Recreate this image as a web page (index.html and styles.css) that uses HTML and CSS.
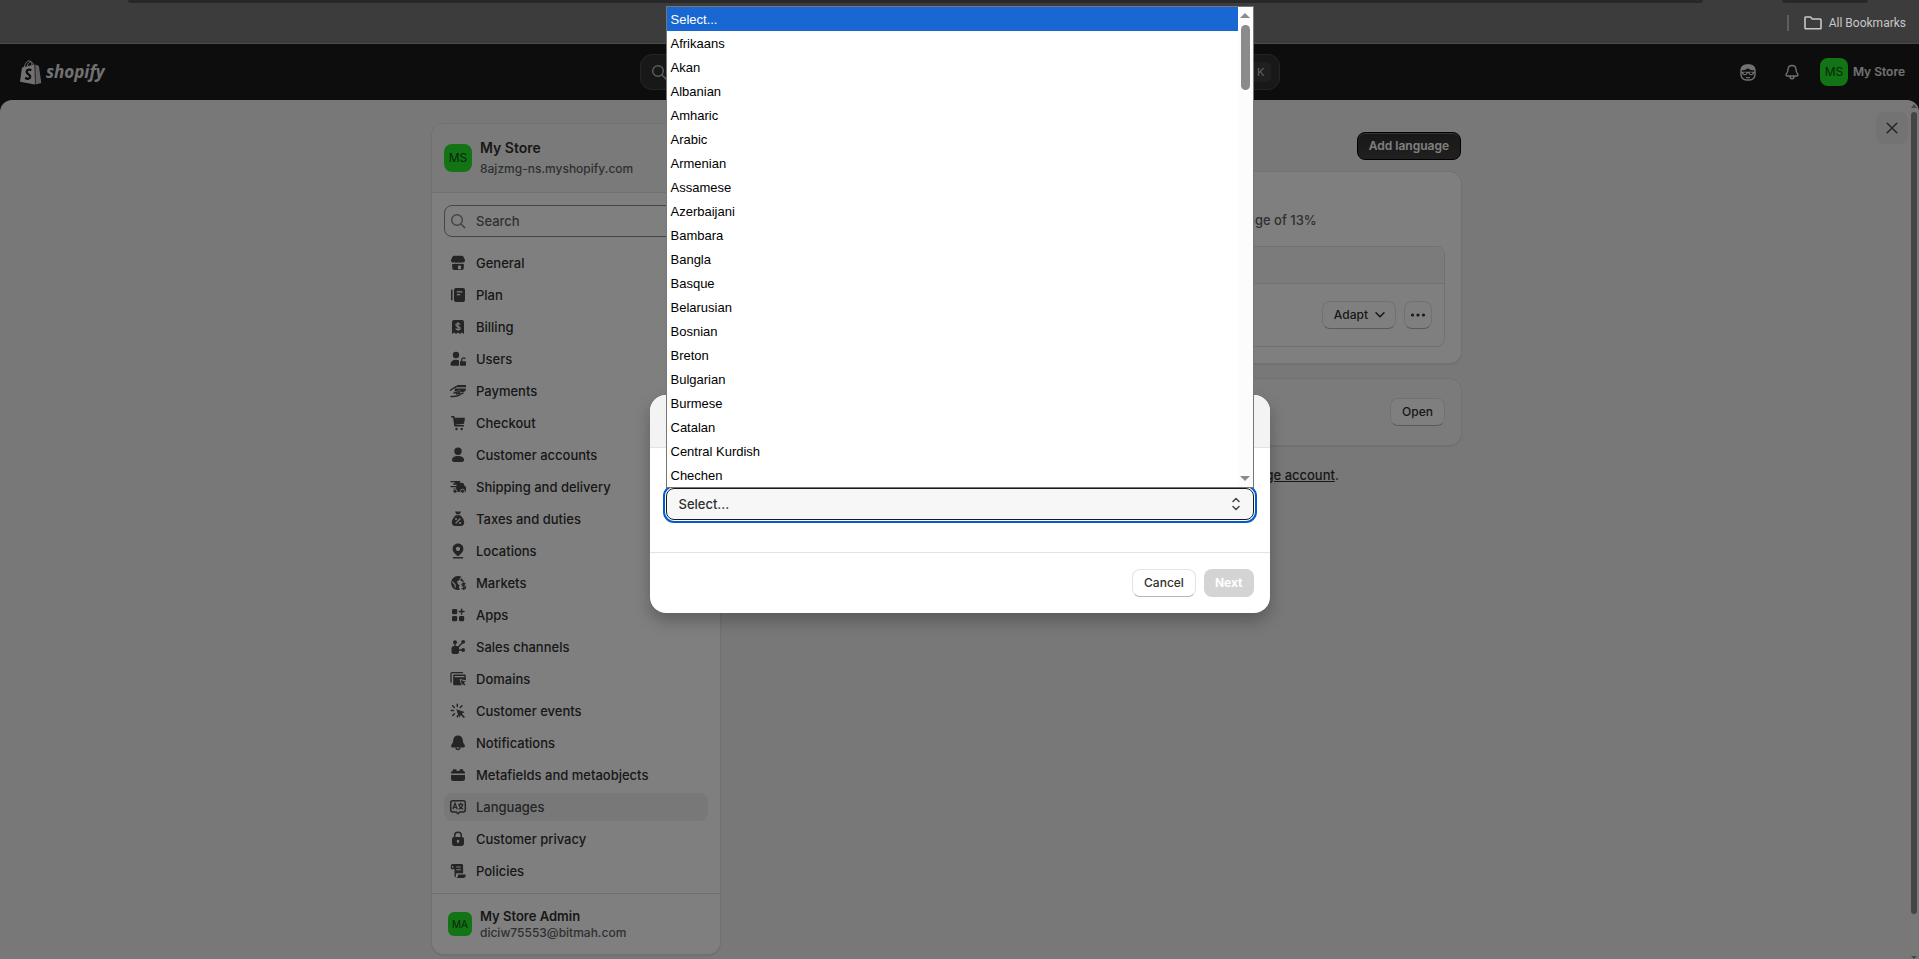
FILE: index.html
```html
<!DOCTYPE html>
<html lang="en">
<head>
    <meta charset="UTF-8">
    <title>Languages - Settings</title>
    <link rel="stylesheet" href="styles.css">
</head>
<body>

<!-- icon set -->
<svg class="sprite" xmlns="http://www.w3.org/2000/svg">
    <symbol id="i-search" viewBox="0 0 20 20">
        <circle cx="9" cy="9" r="5.3" fill="none" stroke="currentColor" stroke-width="1.5"/>
        <path d="M13 13l3.6 3.6" stroke="currentColor" stroke-width="1.5" stroke-linecap="round"/>
    </symbol>
    <symbol id="i-general" viewBox="0 0 20 20">
        <path d="M6.500 2.800h7c1 0 1.800.5 2.200 1.400L17 7v.7a2 2 0 0 1-3.500 1.200 2.200 2.200 0 0 1-3.500 0 2.200 2.200 0 0 1-3.500 0A2 2 0 0 1 3 7.700V7l1.300-2.800c.4-.9 1.200-1.400 2.200-1.400z"/>
        <path fill-rule="evenodd" d="M4.200 11c.9.200 1.700 0 2.500-.5 1 .7 2.300.7 3.300 0 1 .7 2.300.7 3.300 0 .8.500 1.600.7 2.500.5v4c0 1.100-.9 2-2 2H6.200c-1.100 0-2-.9-2-2zM10.800 12.600c-.5 0-.8.3-.8.800v2.800h3v-2.800c0-.5-.3-.8-.8-.8z"/>
    </symbol>
    <symbol id="i-plan" viewBox="0 0 20 20">
        <rect x="3" y="4.500" width="1.500" height="11" rx=".7"/>
        <path fill-rule="evenodd" d="M8 3h7a2 2 0 0 1 2 2v10a2 2 0 0 1-2 2H8a2 2 0 0 1-2-2V5a2 2 0 0 1 2-2zm.8 3.200v1.300h5.600V6.200zm0 2.800v1.300h3.400V9z"/>
    </symbol>
    <symbol id="i-billing" viewBox="0 0 20 20">
        <path d="M6 3h8a2 2 0 0 1 2 2v12l-2.200-1.400L12 17l-2-1.400L8 17l-1.800-1.400L4 17V5a2 2 0 0 1 2-2z"/>
        <path d="M12.200 7.600c-.4-.8-1.100-1.100-2.200-1.100-1.300 0-2.100.6-2.100 1.500 0 2.200 4.300.9 4.300 3.200 0 1-.9 1.500-2.200 1.500-1.200 0-2-.5-2.300-1.300M10 5.200v8.600" fill="none" stroke="#fff" stroke-width="1.200"/>
    </symbol>
    <symbol id="i-users" viewBox="0 0 20 20">
        <circle cx="8" cy="6" r="3.200"/>
        <path d="M2.500 15.500c0-3 2.300-4.800 5.500-4.800 1.200 0 2.200.2 3 .7v5.400H4c-.9 0-1.500-.5-1.500-1.300z"/>
        <path d="M12 12.200h5.200c.5 0 .8.300.8.800v3c0 .5-.3.800-.8.800H12.800c-.5 0-.8-.3-.8-.8z"/>
        <path d="M13.800 12.500v-2a1.800 1.800 0 0 1 3.400-.6" fill="none" stroke="currentColor" stroke-width="1.300"/>
    </symbol>
    <symbol id="i-payments" viewBox="0 0 20 20">
        <path d="M6.500 6.200C8 4.600 9.500 4 12 4h6v2.200z"/>
        <path d="M7 7.400h11c0 2.600-1.500 3.600-4 3.600h-1.500c-.3-1.200-1.400-1.600-2.800-1.300L6.400 10.600z"/>
        <path d="M2.500 9.200c2-1.600 3.300-2.700 5-3M3 15.500c3.700-.2 7 .5 9.500-2.500L15 12M6 12l4.500-1.200c1.400-.3 1.500 1.300.3 1.600L8.500 13" fill="none" stroke="currentColor" stroke-width="1.400" stroke-linecap="round"/>
    </symbol>
    <symbol id="i-checkout" viewBox="0 0 20 20">
        <path d="M3.700 3.700h2l1.300 9.100h8.500" fill="none" stroke="currentColor" stroke-width="1.500" stroke-linecap="round" stroke-linejoin="round"/>
        <path d="M6 4.800h10.200c.5 0 .8.400.7.900l-.8 4.500c-.1.500-.5.800-1 .8l-8.300.7z"/>
        <circle cx="8.500" cy="16" r="1.200"/><circle cx="13.700" cy="16" r="1.200"/>
    </symbol>
    <symbol id="i-accounts" viewBox="0 0 20 20">
        <circle cx="10" cy="6.200" r="3.700"/>
        <path d="M4 15c0-2.600 2.600-4 6-4s6 1.400 6 4c0 1.200-.8 2-2 2H6c-1.200 0-2-.8-2-2z"/>
    </symbol>
    <symbol id="i-shipping" viewBox="0 0 20 20">
        <path d="M6.500 4h5.800v2h1.900c1 0 1.500.5 1.800 1.400l.5 1.600 1.500.8v4.200c0 .5-.3.900-1 .9H5.500V11.500h2.600v-1.300H2.500V9h6V7.700H5V6.400h1.500z"/>
        <path d="M3 4.700h5" stroke="currentColor" stroke-width="1.300" stroke-linecap="round"/>
        <circle cx="7" cy="14.200" r="2" stroke="#fff" stroke-width=".8"/><circle cx="14.500" cy="14.200" r="2" stroke="#fff" stroke-width=".8"/>
    </symbol>
    <symbol id="i-taxes" viewBox="0 0 20 20">
        <path d="M7 2.500h6l-1.300 2.800H8.300z"/>
        <path d="M7.800 6.300h4.400c2.200 1.700 4 4.700 4 7.200 0 2.300-1.300 3.500-3.500 3.500H7.300c-2.200 0-3.500-1.200-3.500-3.500 0-2.500 1.800-5.500 4-7.200z"/>
        <path d="M12.300 9.500l-4.600 4.800" stroke="#fff" stroke-width="1.200"/>
        <circle cx="8" cy="10" r="1" fill="#fff"/><circle cx="12" cy="13.900" r="1" fill="#fff"/>
    </symbol>
    <symbol id="i-locations" viewBox="0 0 20 20">
        <path fill-rule="evenodd" d="M10 2.500c3 0 5.400 2.300 5.400 5.300 0 3.300-2.800 5.300-4.300 6.700a1.500 1.500 0 0 1-2.200 0C7.400 13.100 4.600 11.100 4.600 7.800c0-3 2.400-5.300 5.400-5.300zm0 3.300a2.100 2.100 0 1 0 0 4.200 2.100 2.100 0 0 0 0-4.200z"/>
        <path d="M5.500 16.700h9" stroke="currentColor" stroke-width="1.500" stroke-linecap="round"/>
    </symbol>
    <symbol id="i-markets" viewBox="0 0 20 20">
        <path d="M10 3a7 7 0 1 0 2 13.700l-1.300-2.500 1-1.900-2-1.400-.6-2.600 2.700-1.500V5l2-.9A7 7 0 0 0 10 3z"/>
        <path d="M4.200 8.700l2.800 2.800.3 3" stroke="#fff" stroke-width="1.200" fill="none"/>
        <path d="M13 5l3.300 3.500-2 .3-2-1.600z"/>
        <path d="M17.400 11.300c-.4-.6-1-.8-1.700-.8-1 0-1.700.5-1.700 1.300 0 1.900 3.600.8 3.600 2.700 0 .9-.8 1.400-1.900 1.400-.9 0-1.600-.3-1.900-1M15.800 9.300v7.800" fill="none" stroke="currentColor" stroke-width="1.300"/>
    </symbol>
    <symbol id="i-apps" viewBox="0 0 20 20">
        <rect x="4" y="4" width="5.200" height="5.200" rx="1.200"/>
        <rect x="4" y="11" width="5.200" height="5.200" rx="1.200"/>
        <rect x="11" y="11" width="5.200" height="5.200" rx="1.200"/>
        <path d="M13.600 4.200v4.800M11.200 6.600H16" stroke="currentColor" stroke-width="1.500" stroke-linecap="round"/>
    </symbol>
    <symbol id="i-sales" viewBox="0 0 20 20">
        <rect x="3.500" y="9" width="7.500" height="8" rx="2.600"/>
        <path d="M7 5v5M15 5l-5.500 6M10 13h5.500" stroke="currentColor" stroke-width="1.300"/>
        <circle cx="7" cy="5.200" r="2"/><circle cx="15.200" cy="4.800" r="1.900"/><circle cx="15.200" cy="13" r="1.900"/>
    </symbol>
    <symbol id="i-domains" viewBox="0 0 20 20">
        <path d="M3 13V4.700C3 4 3.300 3.700 4 3.700h10.500" fill="none" stroke="currentColor" stroke-width="1.300" stroke-linecap="round"/>
        <path fill-rule="evenodd" d="M6.500 5.500h10c.8 0 1.300.5 1.300 1.300v4.400L11.500 10l1.800 6.300H6.500c-.8 0-1.300-.5-1.300-1.300V6.800c0-.8.500-1.300 1.300-1.300zm0 1.600v1.100h9.900V7.100z"/>
        <path d="M12.700 11l5 1.800-2 .9 1.800 1.900-1.200 1-1.600-1.900-.8 1.800z"/>
    </symbol>
    <symbol id="i-events" viewBox="0 0 20 20">
        <path d="M9.300 3.200v2.300M4.700 4.800l1.700 1.700M3.200 9.500h2.300M4.700 14.500l1.800-1.800M9.400 15.800v-1M13.900 4.800l-1.700 1.700" stroke="currentColor" stroke-width="1.500" stroke-linecap="round"/>
        <path d="M8.300 8.300l8.400 2.800-2.900 1.700 3.200 3.100-1.300 1.200-3-3.200-1.600 2.900z"/>
    </symbol>
    <symbol id="i-notify" viewBox="0 0 20 20">
        <path d="M10 2.600c2.800 0 4.600 2 4.800 4.700.1 2 .5 2.700 1.600 4.200 1 1.400.6 2.900-1 2.900H4.600c-1.600 0-2-1.500-1-2.900 1.100-1.500 1.500-2.200 1.600-4.200.2-2.700 2-4.700 4.800-4.700z"/>
        <path d="M8 14.500a2 2 0 0 0 4 0" fill="none" stroke="currentColor" stroke-width="1.300"/>
    </symbol>
    <symbol id="i-meta" viewBox="0 0 20 20">
        <path d="M5.500 4.300h2.300c.5 0 .8.300.8.800v.9h2.800v-.9c0-.5.300-.8.800-.8h2.300c.5 0 .8.300.8.800V6c1 .1 1.700.8 1.700 1.800v.8H3v-.8C3 6.800 3.700 6.100 4.700 6v-.9c0-.5.300-.8.800-.8z"/>
        <path d="M3 10.100h14v3.600c0 1.300-1 2.300-2.300 2.300H5.300C4 16 3 15 3 13.700z"/>
    </symbol>
    <symbol id="i-lang" viewBox="0 0 20 20">
        <path d="M4.800 3.700h10.400c1.200 0 2.100.9 2.100 2.100v7c0 1.200-.9 2.100-2.100 2.100h-3.400L10 16.700l-1.800-1.800H4.800c-1.200 0-2.100-.9-2.100-2.100v-7c0-1.200.9-2.100 2.100-2.100z" fill="none" stroke="currentColor" stroke-width="1.500"/>
        <path d="M4.800 12.200L7 6.300l2.200 5.900M5.500 10.500h3M10.300 7.300h5M12.800 5.800v1.500M11 7.800c.5 2 2 3.600 4.200 4.400M14.600 7.800c-.4 2-1.800 3.600-4 4.400" fill="none" stroke="currentColor" stroke-width="1.200"/>
    </symbol>
    <symbol id="i-privacy" viewBox="0 0 20 20">
        <path d="M6.700 9V6.500a3.300 3.300 0 0 1 6.600 0V9" fill="none" stroke="currentColor" stroke-width="1.500"/>
        <path fill-rule="evenodd" d="M6 8h8c1.200 0 2 .8 2 2v4.500c0 1.500-1 2.500-2.500 2.500h-7C5 17 4 16 4 14.500V10c0-1.200.8-2 2-2zm4 2.700a1.300 1.300 0 0 0-.7 2.400v1h1.400v-1a1.300 1.300 0 0 0-.7-2.400z"/>
    </symbol>
    <symbol id="i-policies" viewBox="0 0 20 20">
        <path d="M4.800 3H13.500c1 0 1.600.6 1.600 1.600v7.600H9.300c-1 0-1.500.7-1.500 1.600v2.500c-1 0-1.300-.7-1.300-1.500V8.300H3.800c-.6 0-1-.3-1-.9V5c0-1.200.8-2 2-2z"/>
        <path d="M10 13.500h7.700v1c0 1.500-.9 2.500-2.400 2.500H8.200c1.300-.3 1.800-1.200 1.800-2.400z"/>
        <path d="M8.300 6h4.500M8.300 8.700h4.500M4.600 5v2" stroke="#fff" stroke-width="1.100"/>
    </symbol>
    <symbol id="i-close" viewBox="0 0 20 20">
        <path d="M5.200 5.200l9.600 9.600M14.800 5.200l-9.600 9.600" fill="none" stroke="currentColor" stroke-width="1.500" stroke-linecap="round"/>
    </symbol>
</svg>

<div class="browser-bar">
    <div class="omnibox"></div>
    <div class="ext"></div>
    <div class="bookmarks">
        <svg width="18" height="14" viewBox="0 0 18 14"><path d="M1.800 1h4.700l1.800 2h8c.4 0 .7.300.7.700V12c0 .5-.3.800-.7.800H1.800c-.4 0-.8-.3-.8-.8V1.800c0-.5.400-.8.8-.8z" fill="none" stroke="currentColor" stroke-width="1.600"/></svg>
        <span>All Bookmarks</span>
    </div>
</div>

<div class="app">
    <header class="topbar">
        <a class="logo" href="#" aria-label="Shopify home">
            <svg width="22" height="25" viewBox="0 0 22 25">
                <path d="M2 7.500L14.500 4.400 15 24.600 0 21.700z" fill="currentColor"/>
                <path d="M15.300 4.600l3.600 1.500L21.300 23l-5.600 1.600z" fill="currentColor" opacity=".85"/>
                <path d="M4.500 7C5 3.700 6.800.9 9 .9c2 0 2.800 1.900 3 4.500M7.300 6.200C7.800 3.500 9.300 1.500 10.800 1.700c1.500.2 2.200 1.500 2.500 3" fill="none" stroke="currentColor" stroke-width="1"/>
                <path d="M11.300 10.300c-2.200-1.200-4.600-.5-4.700 1.500-.1 2.300 3.900 2.600 3.600 5.100-.3 2.100-2.700 2.500-5 .9" fill="none" stroke="#1a1a1a" stroke-width="2.300"/>
            </svg>
            <span>shopify</span>
        </a>
        <button class="global-search" type="button" aria-label="Search">
            <svg class="icon"><use href="#i-search"/></svg>
            <kbd>CTRL</kbd><kbd>K</kbd>
        </button>
        <div class="topbar-right">
            <button class="top-icon" type="button" aria-label="Sidekick">
                <svg width="16" height="17" viewBox="0 0 16 17">
                    <rect x="1" y="1" width="14" height="15" rx="5.500" fill="none" stroke="currentColor" stroke-width="1.400"/>
                    <path d="M1 6.200C1 3 3.500.8 8 .8s7 2.200 7 5.400c-3 .2-5.500-.4-7-2C6.500 5.600 4 6.300 1 6.200z" fill="currentColor"/>
                    <path d="M1 7.800h14v1.300h-1c-.3 1.500-1.200 2.200-2.700 2.200S8.900 10.500 8.500 9.300h-1c-.4 1.200-1.300 2-2.800 2S2.300 10.600 2 9.100H1z" fill="currentColor"/>
                    <path d="M3.600 9.200h2.600M9.800 9.200h2.600" stroke="#1a1a1a" stroke-width="1.400"/>
                    <path d="M6 13.300c1.200.6 2.800.6 4 0" fill="none" stroke="currentColor" stroke-width="1.100"/>
                </svg>
            </button>
            <button class="top-icon" type="button" aria-label="Alerts">
                <svg width="16" height="17" viewBox="0 0 16 17">
                    <path d="M8 1.500c2.400 0 3.900 1.700 4 4 .1 2 .4 2.800 1.500 4.100.9 1.200.5 2.400-1 2.400h-9c-1.500 0-1.900-1.200-1-2.400C3.600 8.300 3.900 7.500 4 5.500c.1-2.300 1.600-4 4-4zM6 12.200c0 3.400 4 3.400 4 0" fill="none" stroke="currentColor" stroke-width="1.400"/>
                </svg>
            </button>
            <button class="store-button" type="button"><span class="avatar">MS</span>My Store</button>
        </div>
    </header>

    <main class="settings">
        <button class="close" type="button" aria-label="Close settings"><svg class="icon"><use href="#i-close"/></svg></button>
        <div class="page-scroll"></div>

        <div class="layout">
            <aside class="panel">
                <div class="panel-head">
                    <span class="avatar">MS</span>
                    <div>
                        <p class="store-name">My Store</p>
                        <p class="small">8ajzmg-ns.myshopify.com</p>
                    </div>
                </div>
                <div class="panel-body">
                    <label class="search">
                        <svg class="icon"><use href="#i-search"/></svg>
                        <input type="search" placeholder="Search" aria-label="Search settings">
                    </label>
                    <nav class="nav">
                        <a href="#"><svg class="icon"><use href="#i-general"/></svg>General</a>
                        <a href="#"><svg class="icon"><use href="#i-plan"/></svg>Plan</a>
                        <a href="#"><svg class="icon"><use href="#i-billing"/></svg>Billing</a>
                        <a href="#"><svg class="icon"><use href="#i-users"/></svg>Users</a>
                        <a href="#"><svg class="icon"><use href="#i-payments"/></svg>Payments</a>
                        <a href="#"><svg class="icon"><use href="#i-checkout"/></svg>Checkout</a>
                        <a href="#"><svg class="icon"><use href="#i-accounts"/></svg>Customer accounts</a>
                        <a href="#"><svg class="icon"><use href="#i-shipping"/></svg>Shipping and delivery</a>
                        <a href="#"><svg class="icon"><use href="#i-taxes"/></svg>Taxes and duties</a>
                        <a href="#"><svg class="icon"><use href="#i-locations"/></svg>Locations</a>
                        <a href="#"><svg class="icon"><use href="#i-markets"/></svg>Markets</a>
                        <a href="#"><svg class="icon"><use href="#i-apps"/></svg>Apps</a>
                        <a href="#"><svg class="icon"><use href="#i-sales"/></svg>Sales channels</a>
                        <a href="#"><svg class="icon"><use href="#i-domains"/></svg>Domains</a>
                        <a href="#"><svg class="icon"><use href="#i-events"/></svg>Customer events</a>
                        <a href="#"><svg class="icon"><use href="#i-notify"/></svg>Notifications</a>
                        <a href="#"><svg class="icon"><use href="#i-meta"/></svg>Metafields and metaobjects</a>
                        <a href="#" class="on"><svg class="icon"><use href="#i-lang"/></svg>Languages</a>
                        <a href="#"><svg class="icon"><use href="#i-privacy"/></svg>Customer privacy</a>
                        <a href="#"><svg class="icon"><use href="#i-policies"/></svg>Policies</a>
                    </nav>
                </div>
                <div class="panel-foot">
                    <span class="avatar avatar-small">MA</span>
                    <div>
                        <p class="admin-name">My Store Admin</p>
                        <p class="small">diciw75553@bitmah.com</p>
                    </div>
                </div>
            </aside>

            <section class="content">
                <div class="content-head">
                    <h1>Languages</h1>
                    <button class="btn-dark" type="button">Add language</button>
                </div>

                <div class="card">
                    <h2>Published languages</h2>
                    <p class="muted">Translating your store in more languages boosts cross-border orders by an average of 13%</p>
                    <table class="lang-table">
                        <thead><tr><th>Language</th><th></th></tr></thead>
                        <tbody>
                            <tr>
                                <td>English</td>
                                <td class="actions">
                                    <button class="btn" type="button">Adapt
                                        <svg width="12" height="8" viewBox="0 0 12 8"><path d="M2 1.800l4 4 4-4" fill="none" stroke="currentColor" stroke-width="1.500" stroke-linecap="round" stroke-linejoin="round"/></svg>
                                    </button>
                                    <button class="btn btn-more" type="button" aria-label="More actions">
                                        <svg width="16" height="4" viewBox="0 0 16 4"><circle cx="2.500" cy="2" r="1.600"/><circle cx="8" cy="2" r="1.600"/><circle cx="13.500" cy="2" r="1.600"/></svg>
                                    </button>
                                </td>
                            </tr>
                        </tbody>
                    </table>
                </div>

                <div class="card card-row">
                    <h2>Translate &amp; Adapt</h2>
                    <button class="btn" type="button">Open</button>
                </div>

                <p class="account-note">To change your account level language or regional settings, <a href="#">manage account</a>.</p>
            </section>
        </div>
    </main>

    <div class="backdrop">
        <form class="modal" aria-label="Add language">
            <div class="modal-head">Add language</div>
            <div class="modal-body">
                <label for="language">Select language</label>
                <div class="field">
                    <select id="language">
                        <option>Select...</option>
                    </select>
                    <svg class="arrows" width="10" height="14" viewBox="0 0 10 14"><path d="M2 4.500L5 1.500l3 3M2 9.500l3 3 3-3" fill="none" stroke="currentColor" stroke-width="1.600" stroke-linecap="round" stroke-linejoin="round"/></svg>

                    <div class="popup">
                        <ul role="listbox" aria-label="Language">
                            <li role="option" class="on">Select...</li>
                            <li role="option">Afrikaans</li>
                            <li role="option">Akan</li>
                            <li role="option">Albanian</li>
                            <li role="option">Amharic</li>
                            <li role="option">Arabic</li>
                            <li role="option">Armenian</li>
                            <li role="option">Assamese</li>
                            <li role="option">Azerbaijani</li>
                            <li role="option">Bambara</li>
                            <li role="option">Bangla</li>
                            <li role="option">Basque</li>
                            <li role="option">Belarusian</li>
                            <li role="option">Bosnian</li>
                            <li role="option">Breton</li>
                            <li role="option">Bulgarian</li>
                            <li role="option">Burmese</li>
                            <li role="option">Catalan</li>
                            <li role="option">Central Kurdish</li>
                            <li role="option">Chechen</li>
                        </ul>
                        <div class="popup-scroll"><i class="up"></i><i class="thumb"></i><i class="down"></i></div>
                    </div>
                </div>
            </div>
            <div class="modal-foot">
                <button class="btn" type="button">Cancel</button>
                <button class="btn-next" type="submit" disabled>Next</button>
            </div>
        </form>
    </div>
</div>

</body>
</html>
```

FILE: styles.css
```css
*{
    margin: 0;
    padding: 0;
    box-sizing: border-box;
}
body{
    display: flex;
    flex-direction: column;
    min-height: 100vh;
    font: 450 13px/20px Inter, "Liberation Sans", sans-serif;
    color: #303030;
    background: #1a1a1a;
    overflow: hidden;
}
a{
    color: inherit;
    text-decoration: none;
}
ul{
    list-style: none;
}
button, input, select{
    font: inherit;
    color: inherit;
    border: 0;
    background: none;
}
svg{
    fill: currentColor;
    flex: none;
}
.sprite{
    display: none;
}
.icon{
    width: 20px;
    height: 20px;
}

/* browser strip */
.browser-bar{
    display: grid;
    grid-template-columns: 1fr 86px 38px;
    grid-template-rows: 3px 1fr;
    height: 44px;
    padding-left: 128px;
    padding-right: 13px;
    background: #3c3c3c;
    border-bottom: 1px solid #4a4a4a;
}
.omnibox, .ext{
    background: #282828;
    border-radius: 0 0 8px 8px;
}
.omnibox{
    margin-right: 79px;
}
.bookmarks{
    grid-column: 1 / 4;
    grid-row: 2;
    justify-self: end;
    align-self: center;
    display: flex;
    align-items: center;
    gap: 7px;
    height: 16px;
    padding-left: 15px;
    border-left: 2px solid #5e5e5e;
    color: #c7c7c7;
    font: 12px/16px Roboto, "Noto Sans", sans-serif;
}

/* admin */
.app{
    position: relative;
    flex: 1;
    display: flex;
    flex-direction: column;
}
.topbar{
    display: grid;
    grid-template-columns: 1fr minmax(0, 640px) 1fr;
    align-items: center;
    height: 56px;
    padding: 0 14px;
    color: #e3e3e3;
}
.logo{
    display: flex;
    align-items: center;
    gap: 4px;
    padding-left: 6px;
    font: italic bold 17px/24px "Open Sans", sans-serif;
}
.global-search{
    display: flex;
    align-items: center;
    gap: 4px;
    height: 36px;
    padding: 0 8px;
    border: 1px solid #4a4a4a;
    border-radius: 12px;
    background: #303030;
    color: #b5b5b5;
}
.global-search .icon{
    margin-right: auto;
}
.global-search kbd{
    height: 20px;
    padding: 0 6px;
    border-radius: 5px;
    background: #404040;
    font: 500 11px/20px Inter, sans-serif;
}
.topbar-right{
    display: flex;
    justify-content: flex-end;
    align-items: center;
    gap: 12px;
}
.top-icon{
    display: grid;
    place-items: center;
    width: 32px;
    height: 32px;
}
.store-button{
    display: flex;
    align-items: center;
    gap: 5px;
    font-size: 12px;
    font-weight: 600;
}
.avatar{
    display: grid;
    place-items: center;
    width: 28px;
    height: 28px;
    border-radius: 8px;
    background: #25e82b;
    color: #0c5010;
    font-size: 12px;
    font-weight: 400;
}
.avatar-small{
    width: 24px;
    height: 24px;
    border-radius: 6px;
    font-size: 10px;
}
.settings{
    position: relative;
    flex: 1;
    padding: 24px 26px 5px 0;
    border-radius: 12px 12px 0 0;
    background: #f1f1f1;
}
.close{
    position: absolute;
    top: 12px;
    right: 11px;
    display: grid;
    place-items: center;
    width: 32px;
    height: 32px;
    border-radius: 8px;
    background: #e6e6e6;
    color: #4a4a4a;
}
.page-scroll{
    position: absolute;
    top: 12px;
    right: 2px;
    bottom: 45px;
    width: 6px;
    border-radius: 3px;
    background: #8b8b8b;
}
.page-scroll::before{
    content: "";
    position: absolute;
    top: -8px;
    border: 3px solid transparent;
    border-top: 0;
    border-bottom: 4px solid #8b8b8b;
}
.page-scroll::after{
    content: "";
    position: absolute;
    bottom: -45px;
    border: 3px solid transparent;
    border-bottom: 0;
    border-top: 3px solid #8b8b8b;
}
.layout{
    display: grid;
    grid-template-columns: 288px 1fr;
    gap: 16px;
    align-items: start;
    max-width: 1029px;
    margin: 0 auto;
}
.panel, .card{
    border-radius: 12px;
    background: #fff;
    box-shadow: 0 0 0 1px #e3e3e3, 0 1px 2px #bbb;
}
.panel-head{
    display: flex;
    align-items: center;
    gap: 8px;
    height: 69px;
    padding: 0 12px;
    border-bottom: 1px solid #e3e3e3;
    border-radius: 12px 12px 0 0;
    background: #f5f5f5;
}
.store-name{
    font-size: 14px;
    font-weight: 600;
    line-height: 22px;
}
.admin-name{
    font-size: 13px;
    font-weight: 600;
    line-height: 18px;
}
.muted{
    color: #616161;
}
.small{
    color: #616161;
    font-size: 12px;
}
.panel-body{
    padding: 12px 12px 8px;
}
.search{
    display: flex;
    align-items: center;
    gap: 8px;
    height: 32px;
    padding: 0 3px;
    border: 1px solid #8a8a8a;
    border-radius: 8px;
    color: #8a8a8a;
}
.search input{
    flex: 1;
    min-width: 0;
    outline: 0;
}
.search input::placeholder{
    color: #616161;
    opacity: 1;
}
.nav{
    display: grid;
    gap: 4px;
    margin-top: 12px;
}
.nav a{
    display: flex;
    align-items: center;
    gap: 8px;
    height: 28px;
    padding: 0 4px;
    border-radius: 8px;
    font-weight: 550;
}
.nav .icon{
    color: #4a4a4a;
}
.nav a.on{
    background: #f1f1f1;
    color: #4a4a4a;
}
.panel-foot{
    display: flex;
    align-items: center;
    gap: 8px;
    height: 61px;
    padding: 0 16px;
    border-top: 1px solid #dcdcdc;
}
.panel-foot .small{
    line-height: 16px;
}

.content-head{
    display: flex;
    justify-content: space-between;
    align-items: center;
    padding: 8px 0 12px;
}
h1{
    font-size: 18px;
    line-height: 28px;
}
h2{
    font-size: 14px;
    line-height: 20px;
    font-weight: 600;
}
.btn, .btn-dark, .btn-next{
    display: flex;
    justify-content: center;
    align-items: center;
    gap: 6px;
    height: 28px;
    padding: 0 11px;
    border-radius: 8px;
    font-size: 12px;
    font-weight: 600;
}
.btn{
    background: #fff;
    border: 1px solid #e3e3e3;
    border-bottom-color: #b5b5b5;
    font-weight: 550;
}
.btn svg{
    margin-right: -2px;
}
.btn-more{
    width: 28px;
    padding: 0;
}
.btn-more svg{
    margin: 0;
}
.btn-dark{
    border: 1px solid #000;
    background: linear-gradient(#303030, #404040);
    box-shadow: inset 0 1px 0 #666;
    color: #fff;
}
.btn-next{
    background: #d4d4d4;
    color: #fff;
    font-weight: 650;
}
.card{
    padding: 16px;
    margin-bottom: 16px;
}
.card .muted{
    margin: 2px 0 16px;
}
.lang-table{
    width: 100%;
    border: 1px solid #e3e3e3;
    border-radius: 8px;
    border-spacing: 0;
    overflow: hidden;
}
.lang-table th{
    height: 37px;
    padding: 0 12px;
    border-bottom: 1px solid #e3e3e3;
    background: #f7f7f7;
    text-align: left;
}
.lang-table td{
    height: 62px;
    padding: 0 12px;
}
.lang-table .actions{
    display: flex;
    justify-content: flex-end;
    align-items: center;
    gap: 8px;
}
.card-row{
    display: flex;
    justify-content: space-between;
    align-items: center;
    height: 66px;
    background: #f7f7f7;
}
.account-note{
    padding-top: 4px;
    text-align: center;
}
.account-note a{
    text-decoration: underline;
}

/* add language dialog */
.backdrop{
    position: absolute;
    inset: 0;
    z-index: 2;
    display: grid;
    place-items: center;
    padding-top: 5px;
    background: rgba(0,0,0,0.5);
}
.modal{
    width: 620px;
    max-width: 100%;
    border-radius: 16px;
    background: #fff;
    box-shadow: 0 8px 16px rgba(0,0,0,0.25);
}
.modal-head{
    padding: 16px;
    border-bottom: 1px solid #e3e3e3;
    border-radius: 16px 16px 0 0;
    background: #f3f3f3;
    font-weight: 600;
    text-align: center;
}
.modal-body{
    padding: 16px 16px 32px;
}
.modal-body label{
    display: block;
    margin-bottom: 4px;
    text-indent: 80px;
}
.field{
    position: relative;
}
.field select{
    display: block;
    width: 100%;
    height: 32px;
    padding: 0 12px;
    border: 1px solid #1a1a1a;
    border-radius: 8px;
    outline: 2px solid #005bd3;
    outline-offset: 1px;
    background: #f7f7f7;
    appearance: none;
}
.arrows{
    position: absolute;
    top: 9px;
    right: 13px;
    color: #4a4a4a;
}
.popup{
    position: absolute;
    left: 0;
    right: 0;
    bottom: 100%;
    display: flex;
    border: 1px solid #767676;
    background: #fff;
    color: #000;
    font: 13px/24px "Liberation Sans", Arial, sans-serif;
}
.popup ul{
    flex: 1;
}
.popup li{
    height: 24px;
    padding: 1px 0 0 4px;
}
.popup li.on{
    background: #1967d2;
    color: #fff;
}
.popup-scroll{
    display: flex;
    flex-direction: column;
    align-items: center;
    width: 15px;
    padding: 6px 0;
    background: #fcfcfc;
}
.popup-scroll .up, .popup-scroll .down{
    border: 5px solid transparent;
}
.popup-scroll .up{
    border-top: 0;
    border-bottom: 5px solid #8b8b8b;
}
.popup-scroll .down{
    margin-top: auto;
    border-bottom: 0;
    border-top: 5px solid #8b8b8b;
}
.popup-scroll .thumb{
    width: 9px;
    height: 65px;
    margin-top: 7px;
    border-radius: 5px;
    background: #8b8b8b;
}
.modal-foot{
    display: flex;
    justify-content: flex-end;
    gap: 8px;
    padding: 16px;
    border-top: 1px solid #e3e3e3;
}
```
